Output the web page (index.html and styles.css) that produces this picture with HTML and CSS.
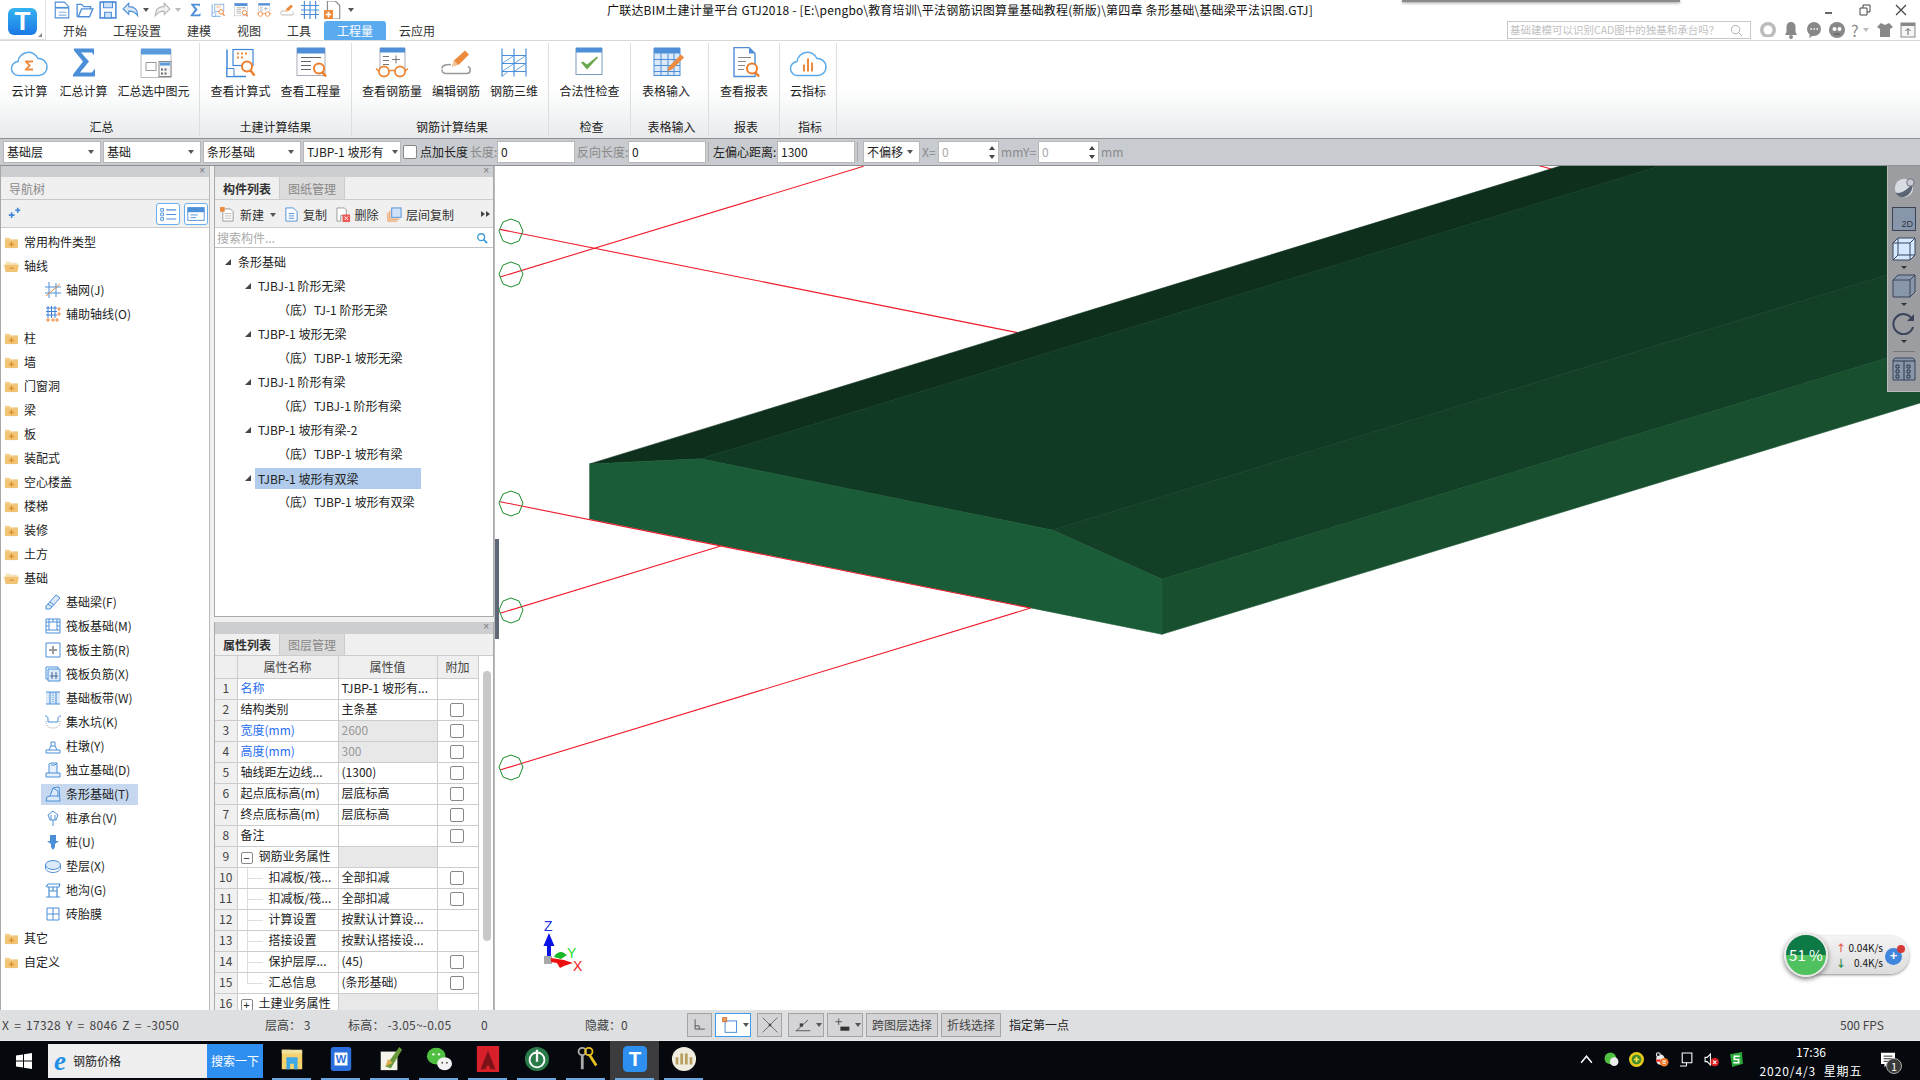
FILE: index.html
```html
<!DOCTYPE html>
<html lang="zh-CN">
<head>
<meta charset="utf-8">
<title>广联达BIM土建计量平台 GTJ2018</title>
<link rel="stylesheet" href="styles.css">
</head>
<body>
<svg class="defs" aria-hidden="true">
  <symbol id="r-cloudsum" viewBox="0 0 40 30"><path d="M10 28a7 7 0 0 1-1-14A10.500 10.500 0 0 1 29 11a8.500 8.500 0 0 1 1 17z" fill="#fff" stroke="#5aa9ea" stroke-width="1.500"/><rect x="13" y="12" width="14" height="12" fill="#fff"/><path d="M16 13h8v2h-5l3 3-3 3h5v2h-8v-1.500l3.500-3.500-3.500-3.500z" fill="#ee8a3c"/></symbol>
  <symbol id="r-sigma" viewBox="0 0 40 30"><path d="M11 1h20v7l-2-3H18l8 9-9 11h12l3-4v8H10v-2l10-13L11 3z" fill="#4a8fd8"/></symbol>
  <symbol id="r-sumsel" viewBox="0 0 40 30"><path d="M7 2h30v28H7z" fill="#fff" stroke="#b8bcc0"/><path d="M7 1h30v6H7z" fill="#5a9ade"/><rect x="12" y="15" width="10" height="8" fill="none" stroke="#999"/><rect x="25" y="14" width="12" height="15" fill="#f5f5f5" stroke="#888"/><rect x="26" y="15" width="10" height="3" fill="#5a9ade"/><path d="M27 21h2v2h-2zM30.500 21h2v2h-2zM27 25h2v2h-2zM30.500 25h2v2h-2z" fill="#666"/></symbol>
  <symbol id="r-calc" viewBox="0 0 40 30"><path d="M7 2v27h19" fill="none" stroke="#3f87d8" stroke-width="1.500"/><rect x="13" y="2" width="20" height="16" fill="#fff" stroke="#3f87d8" stroke-width="1.200"/><path d="M17 5h2v2h-2zM21 5h2v2h-2zM25 5h2v2h-2zM17 9h2v2h-2zM21 9h2v2h-2z" fill="#ee8a3c"/><path d="M7 21h7v8H7z" fill="#fff" stroke="#3f87d8"/><circle cx="27" cy="19" r="5" fill="#fff" stroke="#ee7d2c" stroke-width="2"/><path d="M30.500 23l4 5" stroke="#ee7d2c" stroke-width="2.500"/></symbol>
  <symbol id="r-view" viewBox="0 0 40 30"><rect x="6" y="1" width="28" height="27" fill="#fff" stroke="#aab"/><rect x="6" y="0" width="28" height="6" fill="#4f8fd8"/><path d="M10 10h20M10 14h10M10 18h10M10 22h10M24 10h6" stroke="#666"/><circle cx="28" cy="21" r="5" fill="#fff" stroke="#ee7d2c" stroke-width="2"/><path d="M31.500 25l3.500 4" stroke="#ee7d2c" stroke-width="2.500"/></symbol>
  <symbol id="r-glasses" viewBox="0 0 40 30"><rect x="8" y="1" width="25" height="22" fill="#fff" stroke="#aab"/><rect x="8" y="0" width="25" height="5" fill="#4f8fd8"/><path d="M11 9h6M11 13h6M11 17h6M24 8v8M20 12h8" stroke="#777"/><circle cx="12" cy="24" r="5" fill="#fff" stroke="#ee8a3c" stroke-width="1.800"/><circle cx="28" cy="24" r="5" fill="#fff" stroke="#ee8a3c" stroke-width="1.800"/><path d="M17 23h6M7 24l-3-3M33 24l3-3" stroke="#ee8a3c" stroke-width="1.500"/></symbol>
  <symbol id="r-edit" viewBox="0 0 40 30"><path d="M6 21c0-4 5-4 9-4M32 19c3 1 3 7-1 7H10c-3 0-4-2-4-4" fill="none" stroke="#999" stroke-width="1.500"/><path d="M16 19l2-6L29 3l4 4-10 10z" fill="#ee8a3c"/><path d="M16 19l2-6 4 4z" fill="#f5c49a"/></symbol>
  <symbol id="r-steel3d" viewBox="0 0 40 30"><path d="M8 1v28M32 1v28M20 1v28M8 8h24M8 16h24M8 24h24" stroke="#4a8fd8" fill="none" stroke-width="1.200"/><path d="M8 16l12-8M20 16l12-8M8 24l12-8M20 24l12-8M8 29l6-5" stroke="#4a8fd8" stroke-width=".8"/></symbol>
  <symbol id="r-check" viewBox="0 0 40 30"><rect x="7" y="1" width="26" height="26" fill="#fff" stroke="#7a9cc0"/><rect x="7" y="0" width="26" height="5" fill="#4f8fd8"/><path d="M12 15l6 7 11-12-1-1-10 8-4-3z" fill="#6aa84f"/></symbol>
  <symbol id="r-table" viewBox="0 0 40 30"><rect x="8" y="1" width="26" height="27" fill="#dbe9f8" stroke="#4f8fd8"/><rect x="8" y="0" width="26" height="6" fill="#4f8fd8"/><path d="M8 12h26M8 18h26M8 24h26M15 6v22M22 6v22M28 6v22" stroke="#4f8fd8"/><path d="M21 24l2-5L35 7l3 3-12 12z" fill="#ee8a3c"/></symbol>
  <symbol id="r-report" viewBox="0 0 40 30"><path d="M10 0h15l6 6v23H10z" fill="#fff" stroke="#4f8fd8" stroke-width="1.400"/><path d="M25 0l6 6h-6z" fill="#4f8fd8"/><path d="M14 10h13M14 14h8M14 18h7M14 22h6" stroke="#888"/><circle cx="28" cy="21" r="5" fill="#fff" stroke="#ee7d2c" stroke-width="2"/><path d="M31.500 25l3.500 4" stroke="#ee7d2c" stroke-width="2.500"/></symbol>
  <symbol id="r-cloudbar" viewBox="0 0 40 30"><path d="M10 28a7 7 0 0 1-1-14A10.500 10.500 0 0 1 29 11a8.500 8.500 0 0 1 1 17z" fill="#fff" stroke="#5aa9ea" stroke-width="1.500"/><path d="M15 17h2v7h-2zM19 11h2v13h-2zM23 15h2v9h-2z" fill="#ee8a3c"/></symbol>

  <symbol id="q-doc" viewBox="0 0 16 16"><path d="M2 1h8l4 4v10H2z" fill="#fff" stroke="#4f8fd8"/><path d="M2 6h12" stroke="#4f8fd8" stroke-width="1.500"/><path d="M5 10h7M5 12.500h7" stroke="#8ab4e4"/></symbol>
  <symbol id="q-open" viewBox="0 0 16 16"><path d="M1 14V3h4l2 2h6v2H5L2 14h10l3-7h-2" fill="none" stroke="#4f8fd8" stroke-width="1.200"/></symbol>
  <symbol id="q-save" viewBox="0 0 16 16"><path d="M1 1h14v14H1z" fill="#fff" stroke="#4f8fd8" stroke-width="1.400"/><path d="M4 1h8v5H4zM5 10h6v5H5z" fill="#cfe2f7" stroke="#4f8fd8"/></symbol>
  <symbol id="q-undo" viewBox="0 0 16 16"><path d="M6 2L1 7l5 5V9c4 0 6 1 8 4 0-5-3-8-8-8z" fill="#dbe9f8" stroke="#4f8fd8"/></symbol>
  <symbol id="q-redo" viewBox="0 0 16 16"><path d="M10 2l5 5-5 5V9c-4 0-6 1-8 4 0-5 3-8 8-8z" fill="#f2f2f2" stroke="#b5b5b5"/></symbol>
  <symbol id="q-grid" viewBox="0 0 16 16"><path d="M3 0v16M8 0v16M13 0v16M0 4h16M0 8h16M0 12h16" stroke="#4a8fd8" fill="none"/></symbol>
  <symbol id="q-add" viewBox="0 0 16 16"><path d="M3 0h7l4 4v12H3z" fill="#fff" stroke="#888"/><path d="M0 8h8v8H0z" fill="#ee8a3c"/><path d="M4 9.500v5M1.500 12h5" stroke="#fff" stroke-width="1.500"/></symbol>

  <symbol id="folder" viewBox="0 0 16 14"><path d="M1 2h5l1 1.500h8V13H1z" fill="#f2cf8d"/><path d="M1 5h14v8H1z" fill="#f0c474"/><path d="M8 6.500v5M5.500 9h5" stroke="#d88f2b" stroke-width="1.400"/></symbol>
  <symbol id="folder-open" viewBox="0 0 18 14"><path d="M2 1h5l1 1.500h8V6H2z" fill="#f7e3bb"/><path d="M0 5h18l-2 8.500H2z" fill="#f0c474"/><path d="M6.500 9h5" stroke="#d88f2b" stroke-width="1.400"/></symbol>
  <symbol id="n-grid" viewBox="0 0 16 16"><path d="M4 0v16M11 1v14M0 5h16M0 11h16" stroke="#4a8fd8" fill="none"/><path d="M1 14L15 2" stroke="#ee8a3c"/></symbol>
  <symbol id="n-aux" viewBox="0 0 16 16"><path d="M1 2h11M1 5.500h11M1 9h11M3 0v12M6.500 0v12M10 0v12" stroke="#3f7fd8"/><path d="M13 2h2v2h-2zM13 7h2v2h-2zM2 13h2v2H2zM7 13h2v2H7zM11 13h2v2h-2z" fill="none" stroke="#ee8a3c"/></symbol>
  <symbol id="n-beam" viewBox="0 0 16 16"><path d="M1 12L11 1l4 3L5 15l-4 0z" fill="#dbe9f8" stroke="#4a8fd8"/><path d="M3 10l4 3M5 8l4 3" stroke="#4a8fd8"/></symbol>
  <symbol id="n-raft" viewBox="0 0 16 16"><path d="M1 1h14v14H1z" fill="none" stroke="#4a8fd8"/><path d="M4 4h8v8H4zM1 4h3M12 4h3M1 8h3M12 8h3M1 12h3M12 12h3M4 1v3M8 1v3M12 1v3" fill="none" stroke="#4a8fd8"/></symbol>
  <symbol id="n-main" viewBox="0 0 16 16"><path d="M1 1h14v14H1z" fill="none" stroke="#4a8fd8"/><path d="M8 4v8M4 8h8" stroke="#999" stroke-width="2"/></symbol>
  <symbol id="n-neg" viewBox="0 0 16 16"><path d="M3 3h12v12H3z" fill="#dbe9f8" stroke="#4a8fd8"/><path d="M1 1h12v2M1 1v12h2" fill="none" stroke="#4a8fd8"/><path d="M7 6v7M11 6v7M5 10h8" stroke="#47698f"/></symbol>
  <symbol id="n-strip" viewBox="0 0 16 16"><path d="M1 2h14v12H1z" fill="#dbe9f8"/><path d="M1 2h14M1 14h14M5 2v12M11 2v12" stroke="#4a8fd8"/><path d="M8 3v10" stroke="#4a8fd8" stroke-dasharray="1 1"/></symbol>
  <symbol id="n-pit" viewBox="0 0 16 16"><path d="M0 2c2 0 3 1 3 3v3h10V5c0-2 1-3 3-3" fill="none" stroke="#4a8fd8"/><path d="M1 7c0 5 2 7 7 7s7-2 7-7" fill="none" stroke="#aaa" stroke-dasharray="1 1"/></symbol>
  <symbol id="n-pier" viewBox="0 0 16 16"><path d="M1 15h14v-3H1zM4 12l2-4h4l2 4M6 8V4h4v4" fill="none" stroke="#4a8fd8"/></symbol>
  <symbol id="n-iso" viewBox="0 0 16 16"><path d="M1 15v-4h3V2l2-1h6v10h3v4z" fill="#e8f1fb" stroke="#4a8fd8"/><path d="M4 11h8M12 1l-2 2H6" fill="none" stroke="#4a8fd8"/></symbol>
  <symbol id="n-tj" viewBox="0 0 16 16"><path d="M1 15l1-4 3-1 3-8 6-1 1 14z" fill="#dbe9f8" stroke="#4a8fd8"/><path d="M5 10l8 0M8 2l5 3v6" fill="none" stroke="#4a8fd8"/></symbol>
  <symbol id="n-cap" viewBox="0 0 16 16"><path d="M8 1l5 4-2 5H5L3 5zM8 10v6M6 5v5M10 5v5" fill="none" stroke="#4a8fd8"/></symbol>
  <symbol id="n-pile" viewBox="0 0 16 16"><path d="M5 1h6v6h3l-4 3v3l-2 3-2-3v-3L2 7h3z" fill="#4a8fd8"/></symbol>
  <symbol id="n-pad" viewBox="0 0 16 16"><ellipse cx="8" cy="7" rx="7.500" ry="4.500" fill="#dbe9f8" stroke="#4a8fd8"/><path d="M.5 7v3c0 2.500 3.500 4.500 7.500 4.500s7.500-2 7.500-4.500V7" fill="none" stroke="#4a8fd8"/></symbol>
  <symbol id="n-ditch" viewBox="0 0 16 16"><path d="M1 15h14M2 5h12M3 2h12M4 5v10M12 5v10M8 5v4M4 9h8M1 5l2-3M14 5l1-3" fill="none" stroke="#4a8fd8" stroke-width="1.200"/></symbol>
  <symbol id="n-brick" viewBox="0 0 16 16"><path d="M2 2h12v12H2zM8 2v12M2 8h12" fill="none" stroke="#4a8fd8"/></symbol>
  <symbol id="pin" viewBox="0 0 16 16"><path d="M1 10h7M4.500 6.500v7M9 4h6M12 1v6" stroke="#3f87d8" stroke-width="2"/></symbol>
  <symbol id="t-list" viewBox="0 0 24 22"><path d="M4 5h3v3H4zM4 10h3v3H4zM4 15h3v3H4z" fill="none" stroke="#4a8fd8"/><path d="M10 6.500h11M10 11.500h11M10 16.500h11" stroke="#4a8fd8" stroke-width="1.200"/></symbol>
  <symbol id="t-win" viewBox="0 0 24 22"><rect x="3" y="4" width="18" height="14" fill="#fff" stroke="#4a8fd8"/><rect x="3" y="4" width="18" height="5" fill="#4a8fd8"/><path d="M6 12h8M6 15h6" stroke="#4a8fd8"/></symbol>
  <symbol id="b-new" viewBox="0 0 16 16"><path d="M3 2h8l3 3v10H3z" fill="#fff" stroke="#999"/><path d="M5 7h7M5 9.500h7M5 12h7" stroke="#bbb"/><path d="M0 0h5v5H0z" fill="#ee8a3c"/></symbol>
  <symbol id="b-copy" viewBox="0 0 16 16"><path d="M2 1h8l4 4v10H2z" fill="#fff" stroke="#4f8fd8"/><path d="M5 7h6M5 9.500h6M5 12h6" stroke="#4f8fd8"/></symbol>
  <symbol id="b-del" viewBox="0 0 16 16"><path d="M1 1h8l2 2v6H5v6H1z" fill="#fff" stroke="#999"/><rect x="7" y="8" width="8" height="8" fill="#e55"/><path d="M9 10l4 4M13 10l-4 4" stroke="#fff"/></symbol>
  <symbol id="b-floor" viewBox="0 0 16 16"><path d="M1 6v9h10" fill="none" stroke="#ee8a3c"/><path d="M3 4v9h10" fill="none" stroke="#ee8a3c"/><rect x="5" y="1" width="10" height="10" fill="#cfe2f7" stroke="#4f8fd8"/></symbol>
  <symbol id="s-angle" viewBox="0 0 24 22"><path d="M6 4v12h12" fill="none" stroke="#444"/><path d="M6 12h5v4" fill="none" stroke="#444"/></symbol>
  <symbol id="s-rect" viewBox="0 0 24 22"><rect x="6" y="6" width="14" height="14" fill="#fff" stroke="#4a8fd8" stroke-width="1.200"/><rect x="3" y="2" width="5" height="5" fill="#ee9c5c" stroke="#c86a2c"/></symbol>
  <symbol id="s-x" viewBox="0 0 24 22"><path d="M3 2l18 18M21 2L3 20" stroke="#555"/><rect x="10.500" y="9.500" width="3" height="3" fill="#444"/></symbol>
  <symbol id="s-ang2" viewBox="0 0 24 22"><path d="M3 18h18M4 18L18 5" stroke="#444" fill="none"/><rect x="8" y="9" width="4" height="4" fill="#444"/></symbol>
  <symbol id="s-plus" viewBox="0 0 24 22"><path d="M4 7h8M8 3v8" stroke="#444"/><rect x="10" y="13" width="11" height="5" fill="#333"/></symbol>
</svg>

<div class="app">
  <header class="top">
    <div class="logo"><span class="logo-t">T</span></div>
    <div class="top-rows">
      <div class="title-row">
        <div class="quick">
          <svg class="qi"><use href="#q-doc"/></svg>
          <svg class="qi"><use href="#q-open"/></svg>
          <svg class="qi"><use href="#q-save"/></svg>
          <svg class="qi"><use href="#q-undo"/></svg><i class="caret caret-a"></i>
          <svg class="qi"><use href="#q-redo"/></svg><i class="caret caret-l"></i>
          <svg class="qi"><use href="#r-sigma"/></svg>
          <svg class="qi"><use href="#r-calc"/></svg>
          <svg class="qi"><use href="#r-view"/></svg>
          <svg class="qi"><use href="#r-glasses"/></svg>
          <svg class="qi"><use href="#r-edit"/></svg>
          <svg class="qi"><use href="#q-grid"/></svg>
          <svg class="qi"><use href="#q-add"/></svg>
          <i class="caret caret-more"></i>
        </div>
        <div class="title">广联达BIM土建计量平台 GTJ2018 - [E:\pengbo\教育培训\平法钢筋识图算量基础教程(新版)\第四章 条形基础\基础梁平法识图.GTJ]</div>
        <div class="winctl">
          <svg class="wi" viewBox="0 0 12 12"><path d="M2 8h7v2H2z" fill="#666"/></svg>
          <svg class="wi" viewBox="0 0 12 12"><path d="M1 4h7v7H1zM4 4V1h7v7H8" fill="none" stroke="#444"/></svg>
          <svg class="wi" viewBox="0 0 12 12"><path d="M1 1l10 10M11 1L1 11" stroke="#444" stroke-width="1.200"/></svg>
        </div>
      </div>
      <div class="tab-row">
        <nav class="tabs">
          <span class="tab">开始</span><span class="tab">工程设置</span><span class="tab">建模</span><span class="tab">视图</span><span class="tab">工具</span><span class="tab tab-on">工程量</span><span class="tab">云应用</span>
        </nav>
        <div class="helpbar">
          <div class="ask"><span class="ask-t">基础建模可以识别CAD图中的独基和承台吗？</span><svg class="ask-i" viewBox="0 0 14 14"><circle cx="6" cy="6" r="4.500" fill="none" stroke="#aaa"/><path d="M9 9l4 4" stroke="#aaa"/></svg></div>
          <svg class="hi" viewBox="0 0 18 18"><circle cx="9" cy="9" r="8" fill="#bbb"/><circle cx="9" cy="9" r="4.500" fill="#fff"/><path d="M4 16h10v2H4z" fill="#fff"/></svg>
          <svg class="hi" viewBox="0 0 18 18"><path d="M9 1c-3 0-4.500 2-4.500 5v5L3 14h12l-1.500-3V6C13.500 3 12 1 9 1z" fill="#888"/><circle cx="9" cy="16" r="2" fill="#888"/></svg>
          <svg class="hi" viewBox="0 0 18 18"><circle cx="9" cy="8" r="7" fill="#888"/><path d="M5 13l-1 4 5-3z" fill="#888"/><path d="M5.500 8h1.500M8.500 8H10M11.500 8H13" stroke="#fff" stroke-width="1.400"/></svg>
          <svg class="hi" viewBox="0 0 18 18"><circle cx="9" cy="9" r="8" fill="#888"/><circle cx="6.500" cy="8" r="2" fill="#fff"/><circle cx="11.500" cy="8" r="2" fill="#fff"/><path d="M6 13h6" stroke="#555"/></svg>
          <span class="hq">?</span><i class="caret caret-hq"></i>
          <svg class="hi" viewBox="0 0 18 18"><path d="M5 2l4 2 4-2 4 4-3 2v8H4V8L1 6z" fill="#888"/></svg>
          <svg class="hi" viewBox="0 0 18 18"><rect x="2" y="2" width="14" height="14" fill="#f5f5f5" stroke="#888"/><path d="M2 2h14v3H2z" fill="#888"/><path d="M9 14V8M6.500 10L9 7.500l2.500 2.500" stroke="#666" fill="none"/></svg>
        </div>
      </div>
    </div>
    <div class="shadow-strip"></div>
  </header>

  <section class="ribbon">
    <div class="group">
      <div class="btns">
        <div class="rb"><svg class="ri"><use href="#r-cloudsum"/></svg><span>云计算</span></div>
        <div class="rb"><svg class="ri"><use href="#r-sigma"/></svg><span>汇总计算</span></div>
        <div class="rb"><svg class="ri"><use href="#r-sumsel"/></svg><span>汇总选中图元</span></div>
      </div>
      <div class="g-name">汇总</div>
    </div>
    <div class="group">
      <div class="btns">
        <div class="rb"><svg class="ri"><use href="#r-calc"/></svg><span>查看计算式</span></div>
        <div class="rb"><svg class="ri"><use href="#r-view"/></svg><span>查看工程量</span></div>
      </div>
      <div class="g-name g-plain">土建计算结果</div>
    </div>
    <div class="group">
      <div class="btns">
        <div class="rb"><svg class="ri"><use href="#r-glasses"/></svg><span>查看钢筋量</span></div>
        <div class="rb"><svg class="ri"><use href="#r-edit"/></svg><span>编辑钢筋</span></div>
        <div class="rb"><svg class="ri"><use href="#r-steel3d"/></svg><span>钢筋三维</span></div>
      </div>
      <div class="g-name">钢筋计算结果</div>
    </div>
    <div class="group">
      <div class="btns">
        <div class="rb"><svg class="ri"><use href="#r-check"/></svg><span>合法性检查</span></div>
      </div>
      <div class="g-name">检查</div>
    </div>
    <div class="group">
      <div class="btns btns-start">
        <div class="rb"><svg class="ri"><use href="#r-table"/></svg><span>表格输入</span></div>
      </div>
      <div class="g-name">表格输入</div>
    </div>
    <div class="group">
      <div class="btns">
        <div class="rb"><svg class="ri"><use href="#r-report"/></svg><span>查看报表</span></div>
      </div>
      <div class="g-name">报表</div>
    </div>
    <div class="group">
      <div class="btns">
        <div class="rb"><svg class="ri"><use href="#r-cloudbar"/></svg><span>云指标</span></div>
      </div>
      <div class="g-name">指标</div>
    </div>
  </section>

  <section class="propbar">
    <div class="sel w98">基础层<i class="caret"></i></div>
    <div class="sel w98">基础<i class="caret"></i></div>
    <div class="sel w98">条形基础<i class="caret"></i></div>
    <div class="sel w98 sel-clip"><span>TJBP-1 坡形有</span><i class="caret"></i></div>
    <span class="cb"></span>
    <span class="lb lb-first">点加长度</span>
    <span class="lb lb-dim w25">长度:</span>
    <div class="inp w78">0</div>
    <span class="lb lb-dim w49">反向长度:</span>
    <div class="inp w78">0</div>
    <i class="vsep"></i>
    <span class="lb w62 ml2">左偏心距离:</span>
    <div class="inp w78">1300</div>
    <i class="vsep"></i>
    <div class="sel w57 ml3">不偏移<i class="caret"></i></div>
    <span class="lb lb-dim w14">X=</span>
    <div class="inp w61 inp-dim">0<span class="spin"><i class="up"></i><i class="dn"></i></span></div>
    <span class="lb lb-dim w35">mmY=</span>
    <div class="inp w61 inp-dim">0<span class="spin"><i class="up"></i><i class="dn"></i></span></div>
    <span class="lb lb-dim">mm</span>
  </section>

  <main class="main">
    <aside class="nav panel">
      <div class="strip"><span class="x">×</span></div>
      <div class="nav-title">导航树</div>
      <div class="nav-tools">
        <svg class="pin"><use href="#pin"/></svg>
        <div class="tool-btns">
          <svg class="tb"><use href="#t-list"/></svg>
          <svg class="tb"><use href="#t-win"/></svg>
        </div>
      </div>
      <ul class="navtree">
        <li class="nr"><svg class="fd"><use href="#folder"/></svg>常用构件类型</li>
        <li class="nr"><svg class="fd"><use href="#folder-open"/></svg>轴线</li>
        <li class="nr nc"><svg class="ni"><use href="#n-grid"/></svg>轴网(J)</li>
        <li class="nr nc"><svg class="ni"><use href="#n-aux"/></svg>辅助轴线(O)</li>
        <li class="nr"><svg class="fd"><use href="#folder"/></svg>柱</li>
        <li class="nr"><svg class="fd"><use href="#folder"/></svg>墙</li>
        <li class="nr"><svg class="fd"><use href="#folder"/></svg>门窗洞</li>
        <li class="nr"><svg class="fd"><use href="#folder"/></svg>梁</li>
        <li class="nr"><svg class="fd"><use href="#folder"/></svg>板</li>
        <li class="nr"><svg class="fd"><use href="#folder"/></svg>装配式</li>
        <li class="nr"><svg class="fd"><use href="#folder"/></svg>空心楼盖</li>
        <li class="nr"><svg class="fd"><use href="#folder"/></svg>楼梯</li>
        <li class="nr"><svg class="fd"><use href="#folder"/></svg>装修</li>
        <li class="nr"><svg class="fd"><use href="#folder"/></svg>土方</li>
        <li class="nr"><svg class="fd"><use href="#folder-open"/></svg>基础</li>
        <li class="nr nc"><svg class="ni"><use href="#n-beam"/></svg>基础梁(F)</li>
        <li class="nr nc"><svg class="ni"><use href="#n-raft"/></svg>筏板基础(M)</li>
        <li class="nr nc"><svg class="ni"><use href="#n-main"/></svg>筏板主筋(R)</li>
        <li class="nr nc"><svg class="ni"><use href="#n-neg"/></svg>筏板负筋(X)</li>
        <li class="nr nc"><svg class="ni"><use href="#n-strip"/></svg>基础板带(W)</li>
        <li class="nr nc"><svg class="ni"><use href="#n-pit"/></svg>集水坑(K)</li>
        <li class="nr nc"><svg class="ni"><use href="#n-pier"/></svg>柱墩(Y)</li>
        <li class="nr nc"><svg class="ni"><use href="#n-iso"/></svg>独立基础(D)</li>
        <li class="nr nc"><span class="nc-on"><svg class="ni"><use href="#n-tj"/></svg>条形基础(T)</span></li>
        <li class="nr nc"><svg class="ni"><use href="#n-cap"/></svg>桩承台(V)</li>
        <li class="nr nc"><svg class="ni"><use href="#n-pile"/></svg>桩(U)</li>
        <li class="nr nc"><svg class="ni"><use href="#n-pad"/></svg>垫层(X)</li>
        <li class="nr nc"><svg class="ni"><use href="#n-ditch"/></svg>地沟(G)</li>
        <li class="nr nc"><svg class="ni"><use href="#n-brick"/></svg>砖胎膜</li>
        <li class="nr"><svg class="fd"><use href="#folder"/></svg>其它</li>
        <li class="nr"><svg class="fd"><use href="#folder"/></svg>自定义</li>
      </ul>
    </aside>

    <div class="mid">
      <section class="panel comp">
        <div class="strip"><span class="x">×</span></div>
        <div class="ptabs"><span class="ptab ptab-on">构件列表</span><span class="ptab">图纸管理</span></div>
        <div class="ctools">
          <span class="ct ct-new"><svg class="bi"><use href="#b-new"/></svg>新建<i class="caret"></i></span>
          <span class="ct"><svg class="bi"><use href="#b-copy"/></svg>复制</span>
          <span class="ct"><svg class="bi"><use href="#b-del"/></svg>删除</span>
          <span class="ct"><svg class="bi"><use href="#b-floor"/></svg>层间复制</span>
          <span class="more"><i class="tri"></i><i class="tri"></i></span>
        </div>
        <div class="search"><span>搜索构件...</span><svg class="s-i" viewBox="0 0 14 14"><circle cx="6" cy="6" r="4" fill="#fff" stroke="#3f9bd8" stroke-width="1.600"/><path d="M9 9l4 4" stroke="#3f9bd8" stroke-width="2"/></svg></div>
        <ul class="ctree">
          <li class="cr l0"><i class="ar"></i><span>条形基础</span></li>
          <li class="cr l1"><i class="ar"></i><span>TJBJ-1 阶形无梁</span></li>
          <li class="cr l2"><span>（底）TJ-1 阶形无梁</span></li>
          <li class="cr l1"><i class="ar"></i><span>TJBP-1 坡形无梁</span></li>
          <li class="cr l2"><span>（底）TJBP-1 坡形无梁</span></li>
          <li class="cr l1"><i class="ar"></i><span>TJBJ-1 阶形有梁</span></li>
          <li class="cr l2"><span>（底）TJBJ-1 阶形有梁</span></li>
          <li class="cr l1"><i class="ar"></i><span>TJBP-1 坡形有梁-2</span></li>
          <li class="cr l2"><span>（底）TJBP-1 坡形有梁</span></li>
          <li class="cr l1"><i class="ar"></i><span class="sel-row">TJBP-1 坡形有双梁</span></li>
          <li class="cr l2"><span>（底）TJBP-1 坡形有双梁</span></li>
        </ul>
      </section>

      <section class="panel props">
        <div class="strip strip-b"><span class="x">×</span></div>
        <div class="ptabs ptabs-b"><span class="ptab ptab-on">属性列表</span><span class="ptab">图层管理</span></div>
        <div class="pbody">
          <table class="ptable">
            <thead><tr><th class="c0"></th><th class="c1">属性名称</th><th class="c2">属性值</th><th class="c3">附加</th></tr></thead>
            <tbody>
              <tr><td class="num">1</td><td class="link">名称</td><td>TJBP-1 坡形有...</td><td></td></tr>
              <tr><td class="num">2</td><td>结构类别</td><td>主条基</td><td class="ck"><i class="cb"></i></td></tr>
              <tr><td class="num">3</td><td class="link">宽度(mm)</td><td class="dis">2600</td><td class="ck"><i class="cb"></i></td></tr>
              <tr><td class="num">4</td><td class="link">高度(mm)</td><td class="dis">300</td><td class="ck"><i class="cb"></i></td></tr>
              <tr><td class="num">5</td><td>轴线距左边线...</td><td>(1300)</td><td class="ck"><i class="cb"></i></td></tr>
              <tr><td class="num">6</td><td>起点底标高(m)</td><td>层底标高</td><td class="ck"><i class="cb"></i></td></tr>
              <tr><td class="num">7</td><td>终点底标高(m)</td><td>层底标高</td><td class="ck"><i class="cb"></i></td></tr>
              <tr><td class="num">8</td><td>备注</td><td></td><td class="ck"><i class="cb"></i></td></tr>
              <tr><td class="num">9</td><td class="grp"><i class="ex">−</i>钢筋业务属性</td><td class="dis"></td><td></td></tr>
              <tr><td class="num">10</td><td class="sub">扣减板/筏...</td><td>全部扣减</td><td class="ck"><i class="cb"></i></td></tr>
              <tr><td class="num">11</td><td class="sub">扣减板/筏...</td><td>全部扣减</td><td class="ck"><i class="cb"></i></td></tr>
              <tr><td class="num">12</td><td class="sub">计算设置</td><td>按默认计算设...</td><td></td></tr>
              <tr><td class="num">13</td><td class="sub">搭接设置</td><td>按默认搭接设...</td><td></td></tr>
              <tr><td class="num">14</td><td class="sub">保护层厚...</td><td>(45)</td><td class="ck"><i class="cb"></i></td></tr>
              <tr><td class="num">15</td><td class="sub sub-end">汇总信息</td><td>(条形基础)</td><td class="ck"><i class="cb"></i></td></tr>
              <tr><td class="num">16</td><td class="grp"><i class="ex">+</i>土建业务属性</td><td class="dis"></td><td></td></tr>
            </tbody>
          </table>
          <div class="vscroll"><i class="thumb"></i></div>
        </div>
      </section>
    </div>

    <div class="view">
      <svg class="scene" viewBox="494 166 1426 844" preserveAspectRatio="none">
        <g class="axis">
          <path d="M499 229.400L1016.800 332.600M499 277L862.800 166.300M499 613.300L720 546M499 770L1030 608M1538 165.500L1551 169"/>
        </g>
        <polygon class="f-dark" points="588.700,463.900 699.800,458.800 1660,166 1560,166"/>
        <polygon class="f-top" points="699.800,458.800 1051.600,530 1920,265 1920,166 1660,166"/>
        <polygon class="f-slope" points="1051.600,530 1161.400,579.200 1920,348 1920,265"/>
        <polygon class="f-side" points="1161.400,579.200 1161.400,634.300 1920,403 1920,348"/>
        <polygon class="f-front" points="588.700,463.900 588.700,519 1161.400,634.300 1161.400,579.200 1051.600,530 699.800,458.800"/>
        <g class="axis">
          <path d="M499 501.700L1030 608"/>
        </g>
        <g class="nodes">
          <polygon points="510,219 518,222 522,231 518,241 510,244 502,241 498,231 502,222"/>
          <polygon points="510,262 518,265 522,274 518,284 510,287 502,284 498,274 502,265"/>
          <polygon points="510,491 518,494 522,503 518,513 510,516 502,513 498,503 502,494"/>
          <polygon points="510,598 518,601 522,610 518,620 510,623 502,620 498,610 502,601"/>
          <polygon points="510,755 518,758 522,767 518,777 510,780 502,777 498,767 502,758"/>
        </g>
        <g class="gizmo">
          <path class="gz-b" d="M546 946h4v11h-4zM542.500 946L548 933l5.500 13z"/>
          <path class="gz-grey" d="M543 956h8v8h-8z"/>
          <path class="gz-g" d="M553 957c2-5 8-6 10-4l3 2-6 4z"/>
          <path class="gz-r" d="M550 958l13 2 9 3-9 3-4 2-3-5-6-1z"/>
          <text class="gz-tz" x="543" y="931">Z</text>
          <text class="gz-ty" x="566" y="958">Y</text>
          <text class="gz-tx" x="572" y="971">X</text>
        </g>
      </svg>
      <div class="split"></div>
      <div class="vtools">
        <svg class="vt vt-orb" viewBox="0 0 24 24"><circle cx="12" cy="12" r="10" fill="#d8dce2"/><path d="M3 17C8 19 17 14 21 6c2 8-4 16-11 16-3 0-6-2-7-5z" fill="#5a6472"/><circle cx="19" cy="6" r="4" fill="#c8ccd4" stroke="#667"/></svg>
        <div class="vt vt-2d">2D</div>
        <svg class="vt" viewBox="0 0 24 24"><path d="M1 6l5-5h17v17l-5 5H1z" fill="#d4e8ff" stroke="#39445a"/><path d="M1 6h17v17M18 6l5-5M6 1v17h17M6 18l-5 5" fill="none" stroke="#39445a"/></svg>
        <i class="vt-c"></i>
        <svg class="vt" viewBox="0 0 24 24"><path d="M1 6l5-5h17v17l-5 5H1z" fill="#8896ab" stroke="#39445a"/><path d="M1 6h17v17M18 6l5-5" fill="none" stroke="#39445a"/></svg>
        <i class="vt-c"></i>
        <svg class="vt" viewBox="0 0 24 24"><path d="M20 8A10 10 0 1 0 21 16" fill="none" stroke="#39445a" stroke-width="2"/><path d="M22 3v7h-7z" fill="#39445a"/></svg>
        <i class="vt-c"></i>
        <i class="vt-sep"></i>
        <svg class="vt" viewBox="0 0 24 24"><path d="M1 3l2-2h18l2 2v20H1z" fill="#8896ab" stroke="#39445a"/><path d="M1 4h22M12 4v19M4 8h3v3H4zM4 13h3v3H4zM4 18h3v3H4zM15 8h3v3h-3zM15 13h3v3h-3zM15 18h3v3h-3z" fill="none" stroke="#2d3748"/></svg>
      </div>
      <div class="meter">
        <div class="ball"><span>51 %</span></div>
        <div class="rates">
          <div class="rate"><b class="r-up">↑</b><span>0.04K/s</span></div>
          <div class="rate"><b class="r-dn">↓</b><span>0.4K/s</span></div>
        </div>
        <div class="boost">+<i class="dot"></i></div>
      </div>
    </div>
  </main>

  <footer class="status">
    <span class="st st-xyz">X = 17328 Y = 8046 Z = -3050</span>
    <span class="st st-fl">层高： 3</span>
    <span class="st st-el">标高： -3.05~-0.05</span>
    <span class="st st-z">0</span>
    <span class="st st-hd">隐藏：0</span>
    <div class="sbtns">
      <span class="sb"><svg class="si"><use href="#s-angle"/></svg></span>
      <span class="sb sb-on sb-w36"><svg class="si"><use href="#s-rect"/></svg><i class="caret"></i></span>
      <span class="sb sb-gap"><svg class="si"><use href="#s-x"/></svg></span>
      <span class="sb sb-w36 sb-gap"><svg class="si"><use href="#s-ang2"/></svg><i class="caret"></i></span>
      <span class="sb sb-w36"><svg class="si"><use href="#s-plus"/></svg><i class="caret"></i></span>
      <span class="sb sb-t">跨图层选择</span>
      <span class="sb sb-t">折线选择</span>
    </div>
    <span class="st st-hint">指定第一点</span>
    <span class="st st-fps">500 FPS</span>
  </footer>

  <footer class="taskbar">
    <svg class="win" viewBox="0 0 16 16"><path d="M0 2.500l7-1v6H0zM8 1.300L16 0v7.500H8zM0 8.500h7v6l-7-1zM8 8.500h8V16l-8-1.300z" fill="#fff"/></svg>
    <div class="tsearch"><span class="ie">e</span><span class="ts-t">钢筋价格</span><span class="ts-b">搜索一下</span></div>
    <div class="apps">
      <div class="app-i run"><svg viewBox="0 0 28 28"><path d="M3 4h9l2 3h11v18H3z" fill="#f6d26c"/><path d="M8 12h12v13h-4v-6h-4v6H8z" fill="#3fa9e8"/><path d="M3 4h22v4H3z" fill="#f2e2a0"/></svg></div>
      <div class="app-i run"><svg viewBox="0 0 28 28"><rect x="3" y="1" width="22" height="26" rx="3" fill="#2a6fdc"/><rect x="7" y="7" width="14" height="14" fill="#fff"/><text x="14" y="18" class="wtx">W</text></svg></div>
      <div class="app-i run"><svg viewBox="0 0 28 28"><path d="M4 6h18v20H4z" fill="#f4f4ea"/><path d="M9 22L24 1l3 3-12 20z" fill="#6a9a3c"/><path d="M9 22l3-8 5 4z" fill="#e0b050"/></svg></div>
      <div class="app-i run"><svg viewBox="0 0 28 28"><ellipse cx="11" cy="11" rx="10" ry="9" fill="#4fc03f"/><ellipse cx="20" cy="19" rx="8" ry="7" fill="#f4f4f4"/><circle cx="8" cy="9" r="1.300" fill="#fff"/><circle cx="14" cy="9" r="1.300" fill="#fff"/><circle cx="17.500" cy="18" r="1" fill="#555"/><circle cx="22.500" cy="18" r="1" fill="#555"/></svg></div>
      <div class="app-i run"><svg viewBox="0 0 28 28"><rect x="2" y="0" width="24" height="28" fill="#d8202a"/><path d="M14 5l8 20h-5l-3-5-3 5H6z" fill="#7a1218"/></svg></div>
      <div class="app-i run"><svg viewBox="0 0 28 28"><circle cx="14" cy="14" r="13" fill="#2a7a4a"/><circle cx="14" cy="15" r="8" fill="none" stroke="#fff" stroke-width="2"/><path d="M14 4v13" stroke="#f4f4f4" stroke-width="2.500"/></svg></div>
      <div class="app-i run"><svg viewBox="0 0 28 28"><circle cx="10" cy="6" r="4" fill="none" stroke="#aaa" stroke-width="2"/><path d="M10 10v15" stroke="#aaa" stroke-width="3"/><circle cx="17" cy="6" r="4" fill="none" stroke="#e8c020" stroke-width="2"/><path d="M18 10l7 11" stroke="#e8c020" stroke-width="3"/></svg></div>
      <div class="app-i run app-active"><svg viewBox="0 0 28 28"><rect x="1" y="0" width="26" height="28" rx="5" fill="#2f8fee"/><text x="14" y="22" class="ttx">T</text></svg></div>
      <div class="app-i run"><svg viewBox="0 0 28 28"><circle cx="14" cy="14" r="13" fill="#f0ede0"/><path d="M5 20V12h3v8zM10 20V8h3v12zM15 20V8h3v12zM20 20V12h3v8z" fill="#b8a060"/></svg></div>
    </div>
    <div class="tray">
      <svg class="tr" viewBox="0 0 14 14"><path d="M2 10l5-6 5 6" fill="none" stroke="#fff" stroke-width="1.400"/></svg>
      <svg class="tr" viewBox="0 0 14 14"><circle cx="6" cy="6" r="5.500" fill="#4fc03f"/><circle cx="9.500" cy="9" r="4" fill="#eee"/></svg>
      <svg class="tr" viewBox="0 0 14 14"><circle cx="7" cy="7" r="7" fill="#e8c81c"/><circle cx="7" cy="7" r="4.500" fill="#3a8a2a"/><path d="M7 4.500v5M4.500 7h5" stroke="#ffe34a" stroke-width="1.600"/></svg>
      <svg class="tr" viewBox="0 0 14 14"><ellipse cx="6" cy="7" rx="4" ry="5" fill="#eee"/><circle cx="4" cy="2.500" r="1.800" fill="#222" stroke="#eee"/><circle cx="9.500" cy="9.500" r="4" fill="#ee7c2c"/><path d="M8 8.500h3M8 10.500h3" stroke="#fff"/><path d="M2 8h4" stroke="#e22" stroke-width="2"/></svg>
      <svg class="tr" viewBox="0 0 14 14"><path d="M3 1h9v9H3zM7 10v3M1 13h6" fill="none" stroke="#fff"/></svg>
      <svg class="tr" viewBox="0 0 14 14"><path d="M1 5h2l3-3v10L3 9H1z" fill="none" stroke="#fff"/><circle cx="10" cy="9.500" r="3.800" fill="#d22"/><path d="M8.500 8l3 3M11.500 8l-3 3" stroke="#fff"/></svg>
      <svg class="tr" viewBox="0 0 14 14"><path d="M1 2l11-2 1 11-10 3z" fill="#2aa83a"/><path d="M10 4H5v3h4v3H4" fill="none" stroke="#fff" stroke-width="1.500"/></svg>
    </div>
    <div class="clock"><span>17:36</span><span class="date">2020/4/3 星期五</span></div>
    <div class="notice"><svg class="nt" viewBox="0 0 16 18"><path d="M0 0h16v13H7l-3 4v-4H0z" fill="#fff"/><path d="M3 4h10M3 7h10M3 10h6" stroke="#111"/></svg><span class="badge">1</span></div>
  </footer>
</div>
</body>
</html>
```

FILE: styles.css
```css
* { box-sizing: border-box; }
html, body { margin: 0; padding: 0; }
body {
  width: 1920px; height: 1080px; overflow: hidden; background: #fff; color: #222;
  font: 12px/16px "Noto Sans CJK SC", "Noto Sans", sans-serif;
}
ul { list-style: none; margin: 0; padding: 0; }
i { font-style: normal; }
.defs { position: absolute; width: 0; height: 0; }
.app { display: flex; flex-direction: column; width: 1920px; height: 1080px; }

/* top */
.top { display: flex; height: 41px; background: #fff; border-bottom: 1px solid #d8d8d8; position: relative; flex: none; }
.logo { width: 46px; height: 40px; display: flex; justify-content: center; padding-top: 8px; border-right: 1px solid #e2e2e2; border-bottom: 1px solid #e2e2e2; position: relative; }
.logo::after { content: ""; position: absolute; right: 3px; bottom: 2px; width: 4px; height: 4px; background: #888; clip-path: polygon(100% 0, 100% 100%, 0 100%); }
.logo-t { width: 29px; height: 27px; border-radius: 6px; background: linear-gradient(#35b4f0, #1b78e6); color: #fff; font: 700 26px/27px "Liberation Sans", sans-serif; text-align: center; }
.top-rows { flex: 1; display: flex; flex-direction: column; }
.title-row { height: 20px; display: grid; grid-template-columns: minmax(0, 1fr) auto minmax(0, 1fr); align-items: center; margin-left: -46px; }
.quick { display: flex; align-items: center; gap: 5px; padding-left: 53px; }
.qi { width: 18px; height: 18px; flex: none; }
.title { font-size: 12px; line-height: 18px; white-space: nowrap; color: #111; letter-spacing: .2px; }
.winctl { display: flex; justify-content: flex-end; gap: 24px; padding-right: 13px; }
.wi { width: 12px; height: 12px; }
.tab-row { height: 20px; display: flex; justify-content: space-between; }
.tabs { display: flex; padding-left: 4px; }
.tab { padding: 0 13px; line-height: 21px; height: 20px; color: #333; }
.tab-on { background: #5aaaf0; color: #fff; border-radius: 3px 3px 0 0; margin-top: 1px; line-height: 20px; height: 19px; }
.helpbar { display: flex; align-items: center; padding-right: 3px; gap: 5px; }
.ask { display: flex; align-items: center; width: 244px; height: 18px; border: 1px solid #c8c8c8; margin-right: 3px; padding-left: 2px; overflow: hidden; }
.ask-t { flex: 1; color: #c0c0c0; white-space: nowrap; font-size: 10.5px; line-height: 16px; }
.ask-i { width: 13px; height: 13px; margin-right: 7px; flex: none; }
.hi { width: 18px; height: 18px; }
.hq { color: #888; font-size: 16px; width: 9px; }
.caret { display: inline-block; width: 0; height: 0; border: 3px solid transparent; border-top: 4px solid #555; border-bottom: 0; flex: none; }
.caret-a { margin: 0 -1px 0 -2px; }
.caret-l { border-top-color: #bbb; margin-left: -1px; }
.caret-more { margin-left: 1px; }
.caret-hq { border-top-color: #bbb; margin: 0 2px 0 -2px; }
.shadow-strip { position: absolute; left: 1402px; top: 0; width: 278px; height: 2px; background: #8a8a8a; box-shadow: 0 1px 3px #888; }

/* ribbon */
.ribbon { flex: none; height: 97px; display: grid; grid-template-columns: 200px 152px 197px 82px 78px 71px 57px; background: linear-gradient(#fff 0, #fff 50%, #e8eaec 100%); padding-top: 2px; }
.group { display: flex; flex-direction: column; border-right: 1px solid #dcdee0; height: 93px; }
.btns { flex: 1; display: flex; justify-content: center; }
.btns-start { justify-content: flex-start; padding-left: 6px; }
.rb { display: flex; flex-direction: column; align-items: center; padding: 4px 5px 0; }
.ri { width: 40px; height: 31px; margin-bottom: 5px; }
.rb span { line-height: 16px; color: #222; white-space: nowrap; }
.g-name { height: 18px; line-height: 18px; text-align: center; color: #222; padding-left: 4px; }
.g-plain { padding-left: 0; }

/* property bar */
.propbar { flex: none; height: 28px; background: #c8cbcf; border-top: 1px solid #8e9094; border-bottom: 1px solid #8e9094; display: flex; align-items: center; gap: 2px; padding-left: 3px; }
.sel { height: 22px; background: #fff; border: 1px solid #b8b8b8; display: flex; align-items: center; justify-content: space-between; padding: 0 6px 0 3px; white-space: nowrap; overflow: hidden; }
.sel-clip { padding-right: 2px; }
.w98 { width: 98px; } .w78 { width: 78px; } .w57 { width: 57px; } .w61 { width: 61px; }
.w25 { width: 25px; } .w49 { width: 49px; } .w62 { width: 62px; } .w14 { width: 14px; } .w35 { width: 35px; }
.ml2 { margin-left: 2px; } .ml3 { margin-left: 3px; }
.cb { display: inline-block; width: 14px; height: 14px; background: #fff; border: 1px solid #888; border-radius: 2px; flex: none; }
.lb { white-space: nowrap; color: #222; }
.lb-first { margin-left: 1px; }
.lb-dim { color: #8a8a8a; }
.inp { height: 22px; background: #fff; border: 1px solid #b8b8b8; padding-left: 3px; line-height: 20px; position: relative; display: flex; justify-content: space-between; }
.inp-dim { color: #aaa; padding-right: 3px; }
.spin { display: flex; flex-direction: column; justify-content: center; gap: 5px; }
.up { width: 0; height: 0; border: 3px solid transparent; border-bottom: 4px solid #444; border-top: 0; }
.dn { width: 0; height: 0; border: 3px solid transparent; border-top: 4px solid #444; border-bottom: 0; }
.vsep { width: 1px; height: 20px; background: #aaa; }

/* main */
.main { flex: none; height: 844px; display: flex; background: #f0f0f0; }
.panel { background: #fff; display: flex; flex-direction: column; overflow: hidden; }
.strip { height: 11px; background: #ccced2; position: relative; flex: none; }
.x { position: absolute; right: 4px; top: 0; font: 10px/10px "Liberation Sans", sans-serif; color: #777; }
.nav { width: 210px; border-left: 1px solid #a8a8a8; border-right: 1px solid #bbb; }
.nav-title { height: 23px; line-height: 24px; padding-left: 8px; color: #8a8a8a; background: #f0f0f0; border-bottom: 1px solid #c8c8c8; flex: none; }
.nav-tools { height: 28px; display: flex; align-items: center; justify-content: space-between; background: #f0f0f0; border-bottom: 1px solid #ccc; padding: 0 1px 0 7px; flex: none; }
.pin { width: 13px; height: 13px; }
.tool-btns { display: flex; gap: 4px; }
.tb { width: 24px; height: 22px; border: 1px solid #6ab0ee; border-radius: 3px; background: #fff; }
.navtree { padding-top: 2px; flex: 1; }
.nr { height: 24px; display: flex; align-items: center; padding-left: 3px; white-space: nowrap; color: #222; }
.fd { width: 15px; height: 13px; margin-right: 5px; flex: none; }
.nc { padding-left: 44px; }
.ni { width: 16px; height: 16px; margin-right: 5px; flex: none; }
.nc-on { display: flex; align-items: center; background: #c5d8f0; height: 21px; margin-left: -4px; padding: 0 9px 0 4px; }

.mid { width: 280px; margin-left: 4px; display: flex; flex-direction: column; gap: 5px; }
.comp { height: 451px; border-left: 1px solid #aaa; border-right: 1px solid #aaa; border-bottom: 1px solid #aaa; }
.props { flex: 1; border-left: 1px solid #aaa; border-right: 1px solid #aaa; }
.ptabs { height: 23px; display: flex; background: #f0f0f0; border-bottom: 1px solid #ccc; flex: none; }
.ptab { width: 65px; text-align: center; line-height: 24px; color: #888; background: #dcdcdc; border-right: 1px solid #ccc; }
.ptab-on { background: #f0f0f0; color: #333; font-weight: 700; }
.strip-b { height: 12px; }
.ptabs-b { height: 22px; }
.ptabs-b .ptab { line-height: 22px; }
.ctools { height: 28px; flex: none; display: flex; align-items: center; background: #f0f0f0; border-bottom: 1px solid #ccc; padding: 2px 0 0 5px; position: relative; }
.ct { display: inline-flex; align-items: center; color: #333; margin-right: 8.500px; white-space: nowrap; }
.ct-new .caret { margin-left: 6px; }
.ct-new { margin-right: 8px; }
.ct-new .bi { margin-right: 5px; }
.bi { width: 15px; height: 15px; margin-right: 4px; flex: none; }
.more { position: absolute; right: 3px; top: 11px; display: flex; gap: 1px; }
.tri { width: 0; height: 0; border: 3.500px solid transparent; border-left: 4px solid #444; border-right: 0; }
.search { height: 20px; flex: none; display: flex; align-items: center; justify-content: space-between; padding: 1px 3px 0 2px; color: #aaa; border-bottom: 1px solid #c4c4c4; }
.s-i { width: 12px; height: 12px; margin-right: 2px; }
.ctree { flex: 1; padding-top: 2px; }
.cr { height: 24px; display: flex; align-items: center; white-space: nowrap; color: #222; }
.ar { width: 6px; height: 6px; background: #444; clip-path: polygon(100% 0, 100% 100%, 0 100%); flex: none; margin-right: 7px; }
.l0 { padding-left: 10px; }
.l1 { padding-left: 30px; }
.l2 { padding-left: 63px; }
.sel-row { background: #b0cbeb; height: 21px; line-height: 21px; width: 166px; padding-left: 3px; margin-left: -3px; }

.pbody { flex: 1; display: flex; overflow: hidden; }
.ptable { width: 263px; flex: none; border-collapse: collapse; table-layout: fixed; }
.ptable th { height: 22px; padding: 0; font-weight: 400; background: #efefef; color: #444; border-right: 1px solid #ccc; border-bottom: 1px solid #ccc; }
.c0 { width: 22px; } .c1 { width: 101px; } .c2 { width: 99px; } .c3 { width: 41px; }
.ptable td { height: 21px; padding: 0 0 2px 3px; border-right: 1px solid #ccc; border-bottom: 1px solid #ccc; white-space: nowrap; overflow: hidden; color: #222; line-height: 16px; }
.ptable td.num { background: #f0f0f0; text-align: center; padding: 0 0 2px; color: #444; }
.ptable td.link { color: #2a6ff0; }
.ptable td.dis { background: #e8e8e8; color: #999; }
.ptable td.ck { padding: 0 2px 2px 0; text-align: center; }
.ptable .cb { vertical-align: middle; }
.ptable td.grp { padding-left: 2px; }
.ex { display: inline-block; width: 12px; height: 12px; border: 1px solid #888; border-radius: 2px; background: #fff; margin: 0 6px 0 1px; text-align: center; font: 11px/10px "Liberation Sans", sans-serif; vertical-align: -1px; }
.ptable td.sub { padding-left: 31px; position: relative; }
.sub::before { content: ""; position: absolute; left: 9px; top: -1px; bottom: -1px; border-left: 1px solid #ddd; }
.sub::after { content: ""; position: absolute; left: 9px; top: 10px; width: 16px; border-top: 1px solid #ddd; }
.sub-end::before { bottom: 10px; }
.vscroll { flex: 1; padding: 15px 3px 0 4px; background: #fff; }
.thumb { display: block; width: 8px; height: 270px; background: #c8c8c8; border-radius: 4px; }

/* viewport */
.view { flex: 1; position: relative; background: #fff; border-left: 1px solid #bbb; overflow: hidden; }
.scene { display: block; width: 100%; height: 100%; }
.axis path { fill: none; stroke: #f01a2a; stroke-width: 1.100; }
.f-dark { fill: #0e2f1b; stroke: #0e2f1b; stroke-width: .6; }
.f-top { fill: #103a24; stroke: #103a24; stroke-width: .6; }
.f-slope { fill: #143f27; stroke: #143f27; stroke-width: .6; }
.f-side { fill: #18502f; stroke: #18502f; stroke-width: .6; }
.f-front { fill: #1b5c38; stroke: #1b5c38; stroke-width: .6; }
.nodes polygon { fill: none; stroke: #1a8c2a; stroke-width: 1; }
.gz-b { fill: #0a10e8; }
.gz-grey { fill: #a8a8a8; }
.gz-g { fill: #18b828; }
.gz-r { fill: #ee1010; }
.gizmo text { font: 400 14px "Liberation Sans", sans-serif; }
.gz-tz { fill: #2030e8; }
.gz-ty { fill: #20e020; }
.gz-tx { fill: #f02020; }
.split { position: absolute; left: 0; top: 373px; width: 4px; height: 100px; background: #5e6877; }
.vtools { position: absolute; right: 0; top: 0; width: 33px; height: 226px; background: #9b9da0; display: flex; flex-direction: column; align-items: center; padding-top: 11px; border-left: 1px solid #bbb; border-bottom: 1px solid #bbb; }
.vt { width: 24px; height: 24px; flex: none; margin-bottom: 3px; }
.vt-orb { height: 22px; margin-bottom: 8px; }
.vt-2d { background: #8896ab; border: 1px solid #39445a; font: 9px/10px "Liberation Sans", sans-serif; color: #2d3748; text-align: right; padding: 11px 2px 0 0; margin-bottom: 6px; }
.vt-c { width: 0; height: 0; border: 3px solid transparent; border-top: 3px solid #333; border-bottom: 0; margin: 2px 0 5px; flex: none; }
.vt-sep { width: 22px; height: 1px; background: #777; margin: 3px 0 5px; flex: none; }
.meter { position: absolute; left: 1289px; top: 767px; display: flex; align-items: center; width: 125px; height: 44px; }
.ball { width: 44px; height: 44px; border-radius: 50%; background: linear-gradient(#0c7a44 0, #0e7a46 50%, #4fc25f 50%, #4fc25f 100%); border: 2px solid #e8e8e8; box-shadow: 0 2px 5px #777; color: #fff; font-size: 15px; line-height: 40px; text-align: center; position: relative; z-index: 1; flex: none; }
.rates { margin-left: -22px; padding: 2px 0 2px 30px; height: 38px; width: 103px; border-radius: 0 19px 19px 0; background: linear-gradient(#f4f4f4, #dcdcdc); box-shadow: 0 1px 3px #888; font-size: 10px; line-height: 15px; display: flex; flex-direction: column; justify-content: center; }
.rate { display: flex; justify-content: space-between; width: 47px; color: #111; }
.r-up { color: #e8604c; }
.r-dn { color: #2a8a4a; }
.boost { position: absolute; left: 101px; top: 15px; width: 17px; height: 17px; border-radius: 50%; background: #3f86dc; color: #fff; font: 700 13px/16px "Liberation Sans", sans-serif; text-align: center; }
.dot { position: absolute; right: -3px; top: -3px; width: 8px; height: 8px; border-radius: 50%; background: #d83a3a; }

/* status */
.status { flex: none; height: 30px; background: #dedfe1; display: flex; align-items: center; color: #444; }
.st { white-space: nowrap; }
.st-xyz { width: 265px; padding-left: 2px; letter-spacing: .3px; word-spacing: 2px; }
.st-fl { width: 83px; }
.st-el { width: 133px; letter-spacing: .2px; }
.st-z { width: 104px; }
.st-hd { width: 102px; }
.sbtns { display: flex; gap: 3px; width: 322px; }
.sb { height: 24px; width: 25px; border: 1px solid #a4a4a4; background: #d4d4d6; display: inline-flex; align-items: center; justify-content: center; gap: 3px; color: #444; white-space: nowrap; flex: none; }
.sb-gap { margin-left: 3px; }
.sb-w36 { width: 36px; padding-left: 2px; }
.sb-on { background: #fff; border-color: #3f9bee; }
.sb-t { width: auto; padding: 0 5px; }
.si { width: 20px; height: 18px; flex: none; }
.st-hint { color: #222; width: 831px; }
.st-fps { color: #444; }

/* taskbar */
.taskbar { flex: none; height: 40px; background: #05080d; border-top: 1px solid #e8e8e8; display: flex; align-items: stretch; position: relative; }
.win { width: 16px; height: 16px; margin: 12px 16px 0 16px; flex: none; }
.tsearch { width: 215px; height: 34px; margin-top: 3px; display: flex; align-items: center; background: #eee; flex: none; }
.ie { width: 24px; color: #1e90e8; font: italic 700 27px/30px "Liberation Serif", serif; text-align: center; }
.ts-t { flex: 1; color: #222; padding-left: 1px; }
.ts-b { width: 56px; height: 34px; background: #2f8ff0; color: #fff; line-height: 34px; text-align: center; }
.apps { display: flex; margin-left: 4px; }
.app-i { width: 49px; display: flex; align-items: center; justify-content: center; position: relative; padding-bottom: 3px; }
.app-i svg { width: 26px; height: 28px; }
.run::after { content: ""; position: absolute; left: 5px; right: 5px; bottom: 0; height: 2px; background: #6aa8df; }
.app-active { background: #3c3c3e; }
.wtx { font: 700 12px "Liberation Sans", sans-serif; fill: #2a6fdc; text-anchor: middle; }
.ttx { font: 700 22px "Liberation Sans", sans-serif; fill: #fff; text-anchor: middle; }
.tray { margin-left: auto; display: flex; align-items: center; gap: 10px; padding-bottom: 3px; }
.tr { width: 15px; height: 15px; }
.clock { width: 118px; margin-left: 8px; display: flex; flex-direction: column; align-items: center; justify-content: center; color: #fff; font-size: 12px; line-height: 19px; }
.date { letter-spacing: .9px; word-spacing: 4px; white-space: nowrap; }
.notice { width: 50px; position: relative; padding: 11px 0 0 11px; }
.nt { width: 14px; height: 17px; display: block; }
.badge { position: absolute; left: 16px; top: 17px; width: 16px; height: 16px; border-radius: 50%; background: #3a3a3a; border: 1px solid #aaa; color: #fff; font-size: 11px; line-height: 14px; text-align: center; }
```
